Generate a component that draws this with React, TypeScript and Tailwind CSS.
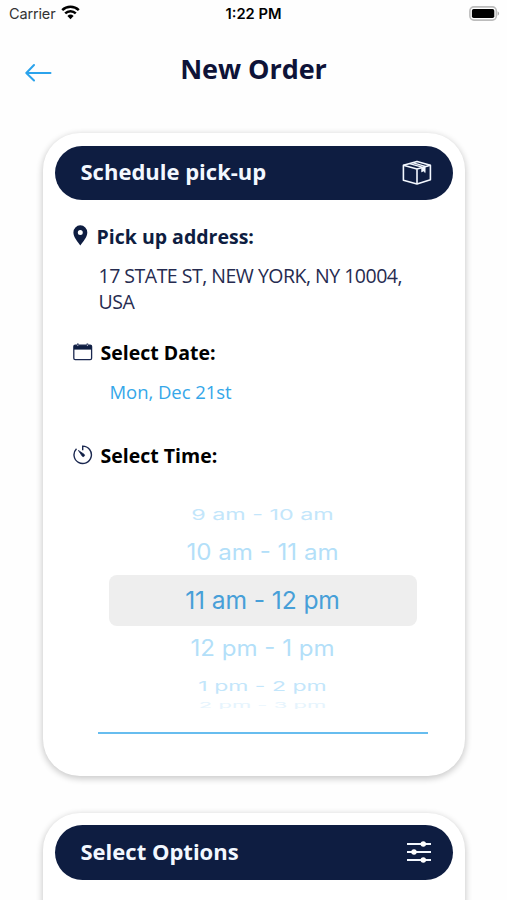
import type { ReactNode } from "react";

type SlotProps = {
  label: string;
  row: string;
  text: string;
};

// Wheel rows flatten and fade the further they are from the selected one.
const slots: SlotProps[] = [
  { label: "9 am - 10 am", row: "h-[30px] pt-px", text: "scale-y-[0.65] text-[23.3px] text-[#c3e6fb]" },
  { label: "10 am - 11 am", row: "h-[45px] pt-[2px]", text: "scale-y-[0.92] text-[24.1px] text-[#b3dff9]" },
  { label: "11 am - 12 pm", row: "h-[51px] rounded-[8px] bg-[#eeeeee]", text: "text-[24.6px] tracking-[-0.1px] text-[#479fd8]" },
  { label: "12 pm - 1 pm", row: "h-[45px] pt-[2px]", text: "scale-y-[0.92] text-[24.1px] text-[#b3dff9]" },
  { label: "1 pm - 2 pm", row: "h-[30px] pt-px", text: "scale-y-[0.6] text-[23px] text-[#c3e6fb]" },
  { label: "2 pm - 3 pm", row: "h-[8px] overflow-hidden", text: "scale-y-[0.35] text-[22px] text-[#e6f4fd]" },
];

function StatusBar() {
  return (
    <div className="grid h-[27px] grid-cols-3 items-center pr-[7px] pl-[9px] font-['Inter',sans-serif] text-[14px] text-black">
      <div className="flex items-center gap-[6px]">
        <span className="text-[14.5px] tracking-[-0.15px] text-[#333]">Carrier</span>
        <svg className="-mt-[2px]" width="19" height="15" viewBox="0 0 19 15" fill="none" stroke="#000" strokeWidth="2.5">
          <path d="M1.2 5.2a12 12 0 0 1 16.6 0" />
          <path d="M4.2 8.4a7.6 7.6 0 0 1 10.6 0" />
          <path d="M6.4 11a4.5 4.5 0 0 1 6.2 0L9.5 14.2z" fill="#000" stroke="none" />
        </svg>
      </div>
      <span className="-ml-[2px] text-center text-[14.7px] leading-5 font-semibold">1:22 PM</span>
      <svg className="-mt-[1px] justify-self-end" width="31" height="15" viewBox="0 0 31 15">
        <rect x="0.9" y="0.9" width="26.4" height="13.2" rx="4" fill="#fff" stroke="#bcbcbc" strokeWidth="1.6" />
        <rect x="2.9" y="2.9" width="22.4" height="9.2" rx="1.8" fill="#000" />
        <path d="M28.6 5.3c2 .8 2 3.6 0 4.4z" fill="#aaa" />
      </svg>
    </div>
  );
}

function PillHeader({ title, children }: { title: string; children: ReactNode }) {
  return (
    <div className="flex h-[54.5px] items-center justify-between rounded-full bg-[#0e1d41] pr-[21px] pl-[26px]">
      <h2 className="-mt-[2px] text-[22px] font-bold text-[#f3f8ff]">{title}</h2>
      {children}
    </div>
  );
}

function BoxIcon() {
  return (
    <svg width="30" height="26" viewBox="0 0 30 26" fill="none" stroke="#f3f8ff" strokeWidth="1.6" strokeLinejoin="round">
      <path d="M1.4 5.2 15 1.4 28.4 5.2V19.8L15 24 1.4 20.2z" />
      <path d="M1.4 5.2 15 9 28.4 5.2M15 9V24" />
      <path d="M7.6 3.6 20 7.2M10.6 2.7 23.2 6.3" strokeWidth="1.4" />
      <path d="M19.6 7.4V12L21.4 11 23.2 12.6V6.3z" fill="#f3f8ff" strokeWidth="0.6" />
    </svg>
  );
}

function SlidersIcon() {
  return (
    <svg className="-mt-[1px]" width="26" height="22" viewBox="0 0 26 22" stroke="#f3f8ff" strokeWidth="1.9" fill="#fff">
      <path d="M1 3h24M1 11h24M1 19h24" />
      <g stroke="none">
        <circle cx="17.3" cy="3" r="2.7" />
        <circle cx="8" cy="11" r="2.7" />
        <circle cx="17.3" cy="19" r="2.7" />
      </g>
    </svg>
  );
}

function PinIcon() {
  return (
    <svg className="-mt-[4px]" width="15" height="21" viewBox="0 0 15 21">
      <path
        fillRule="evenodd"
        fill="#0e1d41"
        d="M7.3.3a7 7 0 0 1 7 7.1C14.3 12 10 16.6 7.3 20.5 4.7 16.6.4 12 .4 7.4A7 7 0 0 1 7.3.3zm0 4.6a2.5 2.5 0 1 0 0 5 2.5 2.5 0 0 0 0-5z"
      />
    </svg>
  );
}

function CalendarIcon() {
  return (
    <svg className="-mt-[2px]" width="20" height="18" viewBox="0 0 20 18" fill="none" stroke="#1b2850">
      <rect x="0.8" y="2.2" width="17.8" height="14.4" rx="1.4" strokeWidth="1.3" />
      <path d="M1 2.2h17.4v4.4H1z" fill="#0e1d41" stroke="none" />
      <path d="M4.8 0.6v3M14.4 0.6v3" strokeWidth="1.6" />
      <path d="M4.8 1.6v1.4M14.4 1.6v1.4" stroke="#fff" strokeWidth="0.7" />
    </svg>
  );
}

function TimerIcon() {
  return (
    <svg className="-mt-[3px]" width="20" height="20" viewBox="0 0 20 20" fill="none" stroke="#1b2850" strokeWidth="1.4">
      <path d="M9.7 5.2V1.1a8.7 8.7 0 1 1-6.2 2.6" />
      <path d="M5.4 5.4 11.1 9.3a1.3 1.3 0 0 1-1.8 1.9z" fill="#0e1d41" strokeWidth="0.8" />
    </svg>
  );
}

export default function App() {
  return (
    <div className="h-[900px] w-[507px] overflow-hidden bg-[#fefefe] font-['Open_Sans',sans-serif]">
      <StatusBar />

      <header className="grid h-[106px] grid-cols-[60px_1fr_60px] items-start pt-[22px]">
        <svg className="mt-[14px] ml-[25px]" width="28" height="19" viewBox="0 0 28 19" fill="none" stroke="#2ba3ec" strokeWidth="2" strokeLinecap="round" strokeLinejoin="round">
          <path d="M9 2 1.3 10l7.7 7.5M1.5 10h24" />
        </svg>
        <h1 className="text-center text-[27px] leading-10 font-bold tracking-[-0.05px] text-[#0e1338]">New Order</h1>
      </header>

      <main className="flex flex-col gap-[37px] px-[42.5px]">
        <section className="h-[643px] rounded-[37px] bg-white px-3 pt-[12.5px] shadow-[0_2px_6px_1px_rgba(0,0,0,0.2)]">
          <PillHeader title="Schedule pick-up">
            <BoxIcon />
          </PillHeader>

          <div className="mt-[24px] flex h-[26px] items-center gap-[9px] pl-[18px]">
            <PinIcon />
            <h3 className="text-[19.5px] font-bold text-[#0e1d41]">Pick up address:</h3>
          </div>
          <p className="mt-[13px] pr-6 pl-[44px] text-[19.5px] leading-[26px] tracking-[-0.5px] text-[#262b50]">
            17 STATE ST, NEW YORK, NY 10004,
            <br />
            USA
          </p>

          <div className="mt-[25px] flex h-[26px] items-center gap-[8px] pl-[18px]">
            <CalendarIcon />
            <h3 className="text-[19.5px] font-bold text-black">Select Date:</h3>
          </div>
          <p className="mt-[13px] pl-[55px] text-[18.5px] leading-[26px] tracking-[-0.05px] text-[#35a7e9]">Mon, Dec 21st</p>

          <div className="mt-[38px] flex h-[26px] items-center gap-[8px] pl-[18px]">
            <TimerIcon />
            <h3 className="text-[19.5px] font-bold text-black">Select Time:</h3>
          </div>

          <div className="mt-[31px] mr-[36px] ml-[54px] flex h-[210px] flex-col overflow-hidden font-['Inter',sans-serif]">
            {slots.map((slot) => (
              <div key={slot.label} className={`flex shrink-0 items-center justify-center ${slot.row}`}>
                <span className={`whitespace-nowrap ${slot.text}`}>{slot.label}</span>
              </div>
            ))}
          </div>

          <div className="mt-[22px] mr-[25px] ml-[43px] h-[2px] bg-[#67bdef]" />
        </section>

        <section className="h-[200px] rounded-[37px] bg-white px-3 pt-[12px] shadow-[0_2px_6px_1px_rgba(0,0,0,0.2)]">
          <PillHeader title="Select Options">
            <SlidersIcon />
          </PillHeader>
        </section>
      </main>
    </div>
  );
}
